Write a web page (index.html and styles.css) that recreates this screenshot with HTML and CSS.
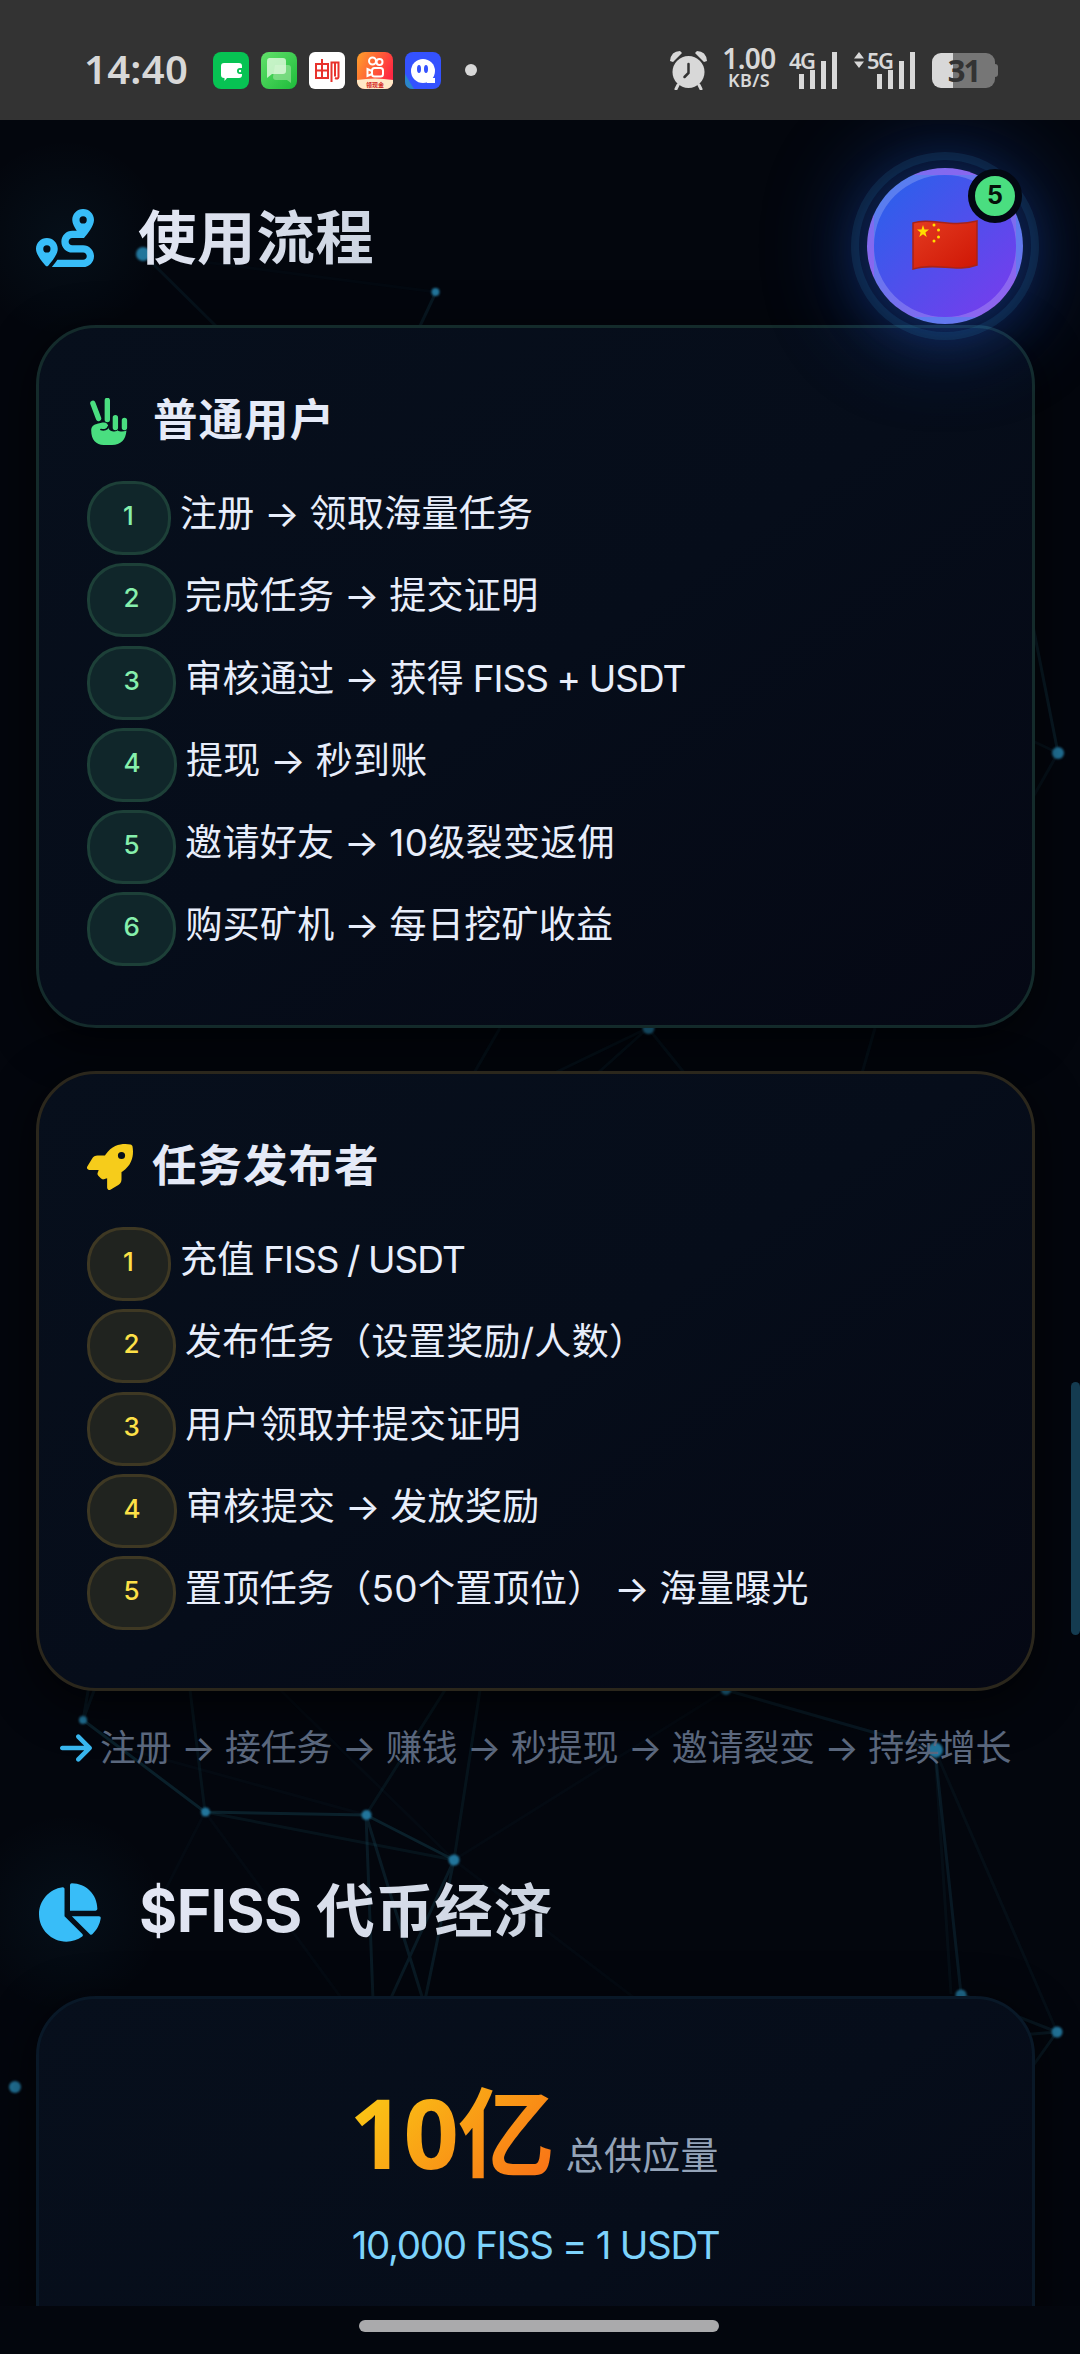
FILE: index.html
```html
<!DOCTYPE html>
<html lang="zh-CN">
<head>
<meta charset="utf-8">
<title>FISS</title>
<link rel="stylesheet" href="styles.css">
</head>
<body>
<header class="status">
  <span class="clock">14:40</span>
  <div class="apps">
    <svg viewBox="0 0 36 37"><rect width="36" height="37" rx="8" fill="#07c353"/><path d="M11 11h15a3 3 0 0 1 3 3v2h-2a3 3 0 0 0 0 6h2v1a3 3 0 0 1-3 3H14l-2.500 3v-3h-.5a3 3 0 0 1-3-3v-9a3 3 0 0 1 3-3z" fill="#fff"/><circle cx="27" cy="19" r="1.200" fill="#fff"/></svg>
    <svg viewBox="0 0 36 37"><defs><linearGradient id="msg" x1="0" y1="0" x2="1" y2="1"><stop stop-color="#62e06a"/><stop offset="1" stop-color="#1dbb3a"/></linearGradient></defs><rect width="36" height="37" rx="8" fill="url(#msg)"/><path d="M14 13h13a3 3 0 0 1 3 3v15l-4-3H15a3 3 0 0 1-3-3z" fill="#a4e6a4" opacity=".6"/><path d="M8 6h14a3 3 0 0 1 3 3v10a3 3 0 0 1-3 3H11l-5 4V9a3 3 0 0 1 2-3z" fill="#e2fae0" opacity=".8"/></svg>
    <svg viewBox="0 0 36 37"><rect width="36" height="37" rx="6" fill="#fff"/><path d="M7 12v14h12V12zM13 7v19M7 18.500h12M22.500 30V10.500h3.500v14M26 10.500h3.500V25q-.5 2.500-3.500 1" fill="none" stroke="#e8322c" stroke-width="2"/></svg>
    <svg viewBox="0 0 36 37"><defs><linearGradient id="ks" x1="0" y1="0" x2="1" y2=".5"><stop stop-color="#ffa22a"/><stop offset="1" stop-color="#ff2742"/></linearGradient></defs><rect width="36" height="37" rx="8" fill="url(#ks)"/><g fill="none" stroke="#fff" stroke-width="2"><circle cx="15.500" cy="9" r="3.500"/><circle cx="22.500" cy="10" r="3"/><rect x="15" y="16" width="11" height="8.500" rx="2.500"/><path d="M15 19l-4.500-2v7l4.500-2"/></g><path d="M0 28q18-3 36 0v3q-2 6-8 6H8q-7 0-8-7z" fill="#ffe9c6"/><text class="cash" x="9" y="35">领现金</text></svg>
    <svg viewBox="0 0 36 37"><rect width="36" height="37" rx="8" fill="#3452ff"/><path d="M0 22l9 15H8q-8 0-8-8z" fill="#2a86c8"/><circle cx="18" cy="19" r="12" fill="#fff"/><path d="M22 26h8v5h-8z" fill="#fff"/><ellipse cx="14" cy="17" rx="2" ry="4" fill="#3452ff"/><ellipse cx="21" cy="17" rx="2" ry="4" fill="#3452ff"/></svg>
  </div>
  <i class="more"></i>
  <div class="system">
    <svg class="alarm" viewBox="0 0 37 39"><g fill="#d8d8d8"><circle cx="18.500" cy="21" r="16"/><path d="M0 10Q1 0 10 0l2 2-9 9zM37 10Q36 0 27 0l-2 2 9 9z"/></g><path d="M8 34l-2 4M29 34l2 4" stroke="#d8d8d8" stroke-width="3" stroke-linecap="round"/><path d="M18.500 13v9l-4 4" fill="none" stroke="#333" stroke-width="2.500" stroke-linecap="round"/></svg>
    <div class="speed"><b>1.00</b><small>KB/S</small></div>
    <div class="net net4"><span>4G</span><svg viewBox="0 0 38 37"><path d="M0 22h5v15H0zM11 18h5v19h-5zM22 9h5v28h-5zM33 0h5v37h-5z" fill="#d8d8d8"/></svg></div>
    <div class="net net5"><svg class="updown" viewBox="0 0 10 16"><path d="M5 0l5 6.500H0zM5 16L0 9.500h10z" fill="#d8d8d8"/></svg><span>5G</span><svg viewBox="0 0 38 37"><path d="M0 22h5v15H0zM11 18h5v19h-5zM22 9h5v28h-5zM33 0h5v37h-5z" fill="#d8d8d8"/></svg></div>
    <div class="battery"><span>31</span></div>
  </div>
</header>

<main class="page">
  <svg class="net-bg" viewBox="0 0 1071 2186">
    <g class="links">
      <path d="M143 134L436 172" opacity=".05"/><path d="M143 134L225 215" opacity=".15"/><path d="M436 172L404 240" opacity=".22"/>
      <path d="M1058 633L1020 440" opacity=".25"/><path d="M1058 633L1020 615M1058 633L1020 700" opacity=".14"/>
      <path d="M648 908L540 960M648 908L590 960M648 908L690 960M500 908L470 960M875 908L860 960" opacity=".13"/>
      <path d="M83 1600L90 1560M83 1600L98 1560" opacity=".2"/><path d="M83 1600L205 1692L366 1695L454 1740" opacity=".32"/>
      <path d="M205 1692L454 1740M190 1570L205 1692M366 1695L445 1570M454 1740L480 1570" opacity=".16"/>
      <path d="M205 1692L350 1890M205 1692L150 1800M130 1630L366 1695M270 1560L454 1740L650 1890" opacity=".06"/>
      <path d="M366 1695L373 1880M366 1695L423 1880M454 1740L425 1880M454 1740L390 1880" opacity=".25"/>
      <path d="M454 1740L726 1570" opacity=".06"/><path d="M726 1570L935 1630L961 1874" opacity=".23"/><path d="M935 1630L951 1874M935 1630L1057 1912" opacity=".1"/>
      <path d="M961 1874L1057 1912L1020 1915M1057 1912L1030 1950" opacity=".22"/>
    </g>
    <g class="dots"><circle cx="143" cy="134" r="7"/><circle cx="435.500" cy="172" r="4"/><circle cx="648.500" cy="908" r="6"/><circle cx="1058" cy="633" r="6"/><circle cx="83" cy="1600" r="4"/><circle cx="205.500" cy="1692" r="4.500"/><circle cx="366.500" cy="1695" r="5"/><circle cx="454" cy="1740" r="5.500"/><circle cx="726" cy="1570" r="5"/><circle cx="935.500" cy="1630" r="7.500"/><circle cx="961" cy="1875" r="5.500"/><circle cx="1057" cy="1912" r="5.500"/><circle cx="15" cy="1967" r="6"/></g>
  </svg>

  <h2 class="heading first">
    <svg class="route" viewBox="0 0 512 512"><path d="M512 96c0 50.200-59.100 125.100-84.600 155c-3.800 4.400-9.400 6.100-14.500 5L320 256c-17.700 0-32 14.300-32 32s14.300 32 32 32l96 0c53 0 96 43 96 96s-43 96-96 96l-276.400 0c8.700-9.900 19.300-22.600 30-36.800c6.300-8.400 12.800-17.600 19-27.200L416 448c17.700 0 32-14.300 32-32s-14.300-32-32-32l-96 0c-53 0-96-43-96-96s43-96 96-96l39.800 0c-21-31.500-39.800-67.700-39.800-96c0-53 43-96 96-96s96 43 96 96zM117.100 489.100c-3.800 4.300-7.200 8.100-10.100 11.300l-1.800 2-.2-.2c-6 4.600-14.600 4-20-1.800C59.800 473 0 402.500 0 352c0-53 43-96 96-96s96 43 96 96c0 30-21.100 67-43.500 97.900c-10.700 14.700-21.700 28-30.800 38.500l-.6 .7zM128 352a32 32 0 1 0 -64 0 32 32 0 1 0 64 0zM416 128a32 32 0 1 0 0-64 32 32 0 1 0 0 64z"/></svg>
    <span>使用流程</span>
  </h2>

  <section class="card green">
    <h3><svg class="hand" viewBox="42 38 112 140"><path d="M50 54L67 99M93 45V102M117 97V126M144 105V126" fill="none" stroke="#4ade80" stroke-width="16" stroke-linecap="round"/><path d="M45 135c0-13 8-17 18-20l16-4c10-2 17 4 17 13 0 7 5 14 15 14 5 0 9-1 12-4 4 3 8 4 13 4 5 0 10-1 14-3-2 28-17 43-43 43H82c-22 0-37-15-37-43z"/><path d="M74 132c9 3 20 0 22-9" fill="none" stroke="#07101c" stroke-width="5" stroke-linecap="round"/></svg><span>普通用户</span></h3>
    <ol>
      <li><b>1</b><span>注册 → 领取海量任务</span></li>
      <li><b>2</b><span>完成任务 → 提交证明</span></li>
      <li><b>3</b><span>审核通过 → 获得<em> FISS + USDT</em></span></li>
      <li><b>4</b><span>提现 → 秒到账</span></li>
      <li><b>5</b><span>邀请好友 → 10级裂变返佣</span></li>
      <li><b>6</b><span>购买矿机 → 每日挖矿收益</span></li>
    </ol>
  </section>

  <section class="card gold">
    <h3><svg class="rocket" viewBox="0 0 512 512"><path d="M156.600 384.900L125.700 354c-8.500-8.500-11.500-20.800-7.700-32.200c3-8.900 7-20.500 11.800-33.800L24 288c-8.600 0-16.600-4.600-20.900-12.100s-4.200-16.700 .2-24.100l52.500-88.500c13-21.900 36.500-35.300 61.900-35.300l82.300 0c2.400-4 4.800-7.700 7.200-11.300C289.100-4.100 411.100-8.100 483.900 5.300c11.600 2.100 20.600 11.200 22.800 22.800c13.400 72.900 9.300 194.800-111.400 276.700c-3.500 2.400-7.300 4.800-11.300 7.200l0 82.300c0 25.400-13.400 49-35.300 61.900l-88.500 52.500c-7.400 4.400-16.600 4.500-24.100 .2s-12.100-12.200-12.100-20.900l0-107.200c-14.100 4.900-26.400 8.900-35.700 11.900c-11.200 3.600-23.400 .5-31.800-7.800zM384 168a40 40 0 1 0 0-80 40 40 0 1 0 0 80z"/></svg><span>任务发布者</span></h3>
    <ol>
      <li><b>1</b><span>充值<em> FISS / USDT</em></span></li>
      <li><b>2</b><span>发布任务（设置奖励/人数）</span></li>
      <li><b>3</b><span>用户领取并提交证明</span></li>
      <li><b>4</b><span>审核提交 → 发放奖励</span></li>
      <li><b>5</b><span>置顶任务（50个置顶位） → 海量曝光</span></li>
    </ol>
  </section>

  <p class="flow">
    <svg viewBox="0 32 448 448"><path d="M438.600 278.600c12.500-12.500 12.500-32.800 0-45.300l-160-160c-12.500-12.500-32.800-12.500-45.300 0s-12.500 32.800 0 45.300L338.800 224 32 224c-17.700 0-32 14.300-32 32s14.300 32 32 32l306.700 0L233.400 393.400c-12.500 12.500-12.500 32.800 0 45.300s32.800 12.500 45.300 0l160-160z"/></svg>
    <span>注册 → 接任务 → 赚钱 → 秒提现 → 邀请裂变 → 持续增长</span>
  </p>

  <h2 class="heading second">
    <svg class="pie" viewBox="32 0 544 512"><path d="M304 240l0-223.400c0-9 7-16.600 16-16.600C443.700 0 544 100.300 544 224c0 9-7.600 16-16.600 16L304 240zM32 272C32 150.700 122.100 50.300 239 34.300c9.200-1.300 17 6.100 17 15.400L256 288 412.500 444.500c6.700 6.700 6.200 17.700-1.500 23.100C371.800 495.600 323.800 512 272 512C139.500 512 32 404.600 32 272zm526.400 16c9.300 0 16.600 7.800 15.400 17c-7.700 55.900-34.600 105.600-73.900 142.300c-6 5.600-15.400 5.200-21.200-.7L320 288l238.400 0z"/></svg>
    <span><em>$FISS</em> 代币经济</span>
  </h2>

  <section class="card blue">
    <div class="supply"><strong>10亿</strong><span>总供应量</span></div>
    <p class="rate">10,000 FISS = 1 USDT</p>
  </section>

  <div class="fab">
    <svg viewBox="0 0 66 50"><defs><linearGradient id="flag" x1="0" y1="0" x2="1" y2="1"><stop stop-color="#e33b20"/><stop offset="1" stop-color="#cf1605"/></linearGradient></defs><path d="M1 3C18-3 38 8 65 1v44C44 53 25 42 1 49z" fill="url(#flag)" stroke="#a82318" stroke-width="1.500"/><g fill="#ffde00"><path d="M11 5l1.500 4.500H17l-3.600 2.900 1.300 4.600L11 14.300 7.300 17l1.300-4.600L5 9.500h4.500z"/><circle cx="22" cy="5" r="1.500"/><circle cx="26.500" cy="10" r="1.500"/><circle cx="26.500" cy="17" r="1.500"/><circle cx="22" cy="21" r="1.500"/></g></svg>
    <span class="count">5</span>
  </div>
  <div class="scroll-thumb"></div>
</main>
<footer class="navbar"><i></i></footer>
</body>
</html>
```
FILE: styles.css
```css
* { box-sizing: border-box; }
body { margin: 0; width: 1080px; height: 2354px; overflow: hidden; display: flex; flex-direction: column; background: #03060d; font-family: Inter, "Noto Sans CJK SC", sans-serif; color: #e8eefb; }
svg { display: block; flex: none; }
h2, h3, p, ol { margin: 0; padding: 0; }
em { font-style: normal; }

.status { height: 120px; flex: none; background: #333; color: #d8d8d8; display: flex; align-items: center; padding: 20px 85px 0 84px; }
.clock { width: 129px; padding-bottom: 4px; font: 600 40px "Noto Sans", sans-serif; letter-spacing: .3px; }
.apps { display: flex; gap: 12px; }
.apps svg { width: 36px; height: 37px; }
.cash { font: 700 6px "Noto Sans CJK SC", sans-serif; fill: #d3261f; }
.more { width: 12px; height: 12px; border-radius: 50%; background: #d8d8d8; margin-left: 24px; }
.system { margin-left: auto; display: flex; align-items: center; }
.alarm { width: 37px; height: 39px; }
.speed { width: 56px; margin-left: 14px; display: flex; flex-direction: column; align-items: center; font-family: "Noto Sans", sans-serif; }
.speed b { font-size: 28px; line-height: 21px; font-weight: 600; letter-spacing: -.6px; }
.speed small { font-size: 18px; line-height: 23px; font-weight: 600; letter-spacing: .4px; }
.net { display: flex; align-items: flex-start; height: 37px; }
.net span { font: 600 22px/16px "Noto Sans", sans-serif; letter-spacing: -1.500px; width: 24px; }
.net svg:last-child { width: 38px; height: 37px; margin-left: -14px; }
.net4 { margin-left: 12px; }
.net5 { margin-left: 17px; }
.updown { width: 10px; height: 16px; margin-right: 3px; }
.battery { position: relative; width: 63px; height: 35px; margin-left: 17px; border-radius: 9px; background: linear-gradient(90deg, #d8d8d8 21px, #767676 21px); display: flex; justify-content: center; align-items: center; color: #333; font: 700 31px/35px "Noto Sans", sans-serif; letter-spacing: -2px; }
.battery::after { content: ""; position: absolute; left: 63px; top: 11px; width: 3px; height: 13px; border-radius: 0 4px 4px 0; background: #767676; }

.page { position: relative; height: 2186px; flex: none; overflow: hidden; padding: 0 45px 0 36px; background: #03060d; }
.net-bg { position: absolute; left: 0; top: 0; width: 1071px; height: 2186px; }
.links { fill: none; stroke: #1a576b; stroke-width: 3; }
.dots { fill: #22759b; filter: blur(1px); }
.heading, .card, .flow { position: relative; }

.heading { display: flex; align-items: center; font-size: 58.500px; font-weight: 700; letter-spacing: .6px; line-height: 80px; }
.heading svg { fill: #38bdf8; }
.heading::before { content: ""; position: absolute; left: -70px; top: -60px; width: 200px; height: 200px; background: radial-gradient(circle, rgba(56, 189, 248, .05), transparent 70%); }
.heading span { background: linear-gradient(120deg, #e5e8f5 0%, #cbd3e0 100%); -webkit-background-clip: text; background-clip: text; color: transparent; }
.heading em { letter-spacing: -.6px; }
.first { padding-top: 78px; }
.first::before { top: 18px; }
.route { width: 58px; height: 60px; margin-right: 44px; }
.second { margin-top: 97px; }
.second span { margin-top: -2px; }
.pie { width: 62px; height: 59px; margin: 0 38px 0 3px; }

.card { border: 3px solid; border-radius: 60px; padding: 0 48px; background: linear-gradient(145deg, #070f1c 0%, #060d1a 50%, #050814 100%); box-shadow: 0 12px 40px 8px rgba(0, 0, 0, .5); }
.first + .card { margin-top: 47px; height: 703px; }
.green { border-color: #142b2b; }
.gold { border-color: #2b271c; margin-top: 43px; height: 620px; }
.blue { border-color: #091827; height: 620px; margin-top: 45px; display: flex; flex-direction: column; align-items: center; }
.card h3 { display: flex; align-items: center; height: 60px; margin-top: 63px; font-size: 44.500px; letter-spacing: 1px; font-weight: 600; color: #e5eaf7; }
.card h3 svg { width: 46px; height: 46px; margin-right: 19px; }
.card h3 span { padding-bottom: 9px; }
.green svg { fill: #4ade80; }
.gold svg { fill: #f6cc1b; }
.card h3 .hand { width: 38px; height: 47px; margin: 0 25px 0 3px; }
.card ol { list-style: none; margin-top: 30px; }
.card li { display: flex; height: 82.300px; font-size: 37px; white-space: nowrap; }
.card li b { height: 74px; min-width: 84px; border: 3px solid #1d4038; border-radius: 36px; background: #10262a; color: #86efac; padding: 0 33px; font-size: 26px; font-weight: 500; line-height: 64px; margin-right: 9px; }
.card li:not(:first-child) b { padding: 0 33.500px; }
.gold li b, .card.gold li b { border-color: #3e3823; background: #20231f; color: #fde047; }
.card li span { line-height: 65px; letter-spacing: .3px; word-spacing: -1px; }
.card li em { letter-spacing: -1px; word-spacing: -.8px; }

.flow { display: flex; align-items: center; height: 56px; margin-top: 29px; padding-left: 24px; color: #5a677d; font-size: 36px; letter-spacing: -.3px; white-space: nowrap; }
.flow svg { width: 32px; height: 32px; fill: #38b6ee; margin-right: 8px; }
.flow span { padding-bottom: 6px; }

.supply { display: flex; align-items: baseline; margin: 60px 3px 0 0; height: 145px; }
.supply strong { font: 700 97px/145px "Noto Sans", "Noto Sans CJK SC", sans-serif; letter-spacing: -1.200px; background: linear-gradient(135deg, #facc15 10%, #f97316 90%); -webkit-background-clip: text; background-clip: text; color: transparent; }
.supply span { color: #94a3b8; font-size: 38px; margin-left: 12px; letter-spacing: .3px; }
.rate { color: #7dd3fc; font-size: 38.500px; line-height: 56px; margin-top: 13px; letter-spacing: -1.300px; }

.fab { position: absolute; left: 867px; top: 48px; width: 156px; height: 156px; border: 7px solid rgba(255, 255, 255, .2); border-radius: 50%; background: linear-gradient(135deg, #2563eb, #7c3aed); display: flex; align-items: center; justify-content: center; box-shadow: 0 0 90px 15px rgba(37, 99, 235, .35), 0 12px 60px rgba(37, 99, 235, .22); }
.fab::before { content: ""; position: absolute; inset: -23px; border: 8px solid rgba(56, 189, 248, .1); border-radius: 50%; }
.fab svg { width: 66px; height: 50px; margin-top: -2px; }
.count { position: absolute; right: -6px; top: -6px; width: 54px; height: 54px; border: 7px solid #030712; border-radius: 50%; background: #4ade80; color: #05110a; font: 700 25px/38px Inter, sans-serif; text-align: center; }
.scroll-thumb { position: absolute; right: 0; top: 1262px; width: 9px; height: 253px; border-radius: 4.500px; background: #143b50; }
.navbar { height: 48px; display: flex; justify-content: center; padding: 14px 2px 0 0; background: #03060d; }
.navbar i { width: 360px; height: 12px; border-radius: 6px; background: #aaaaac; }
```
